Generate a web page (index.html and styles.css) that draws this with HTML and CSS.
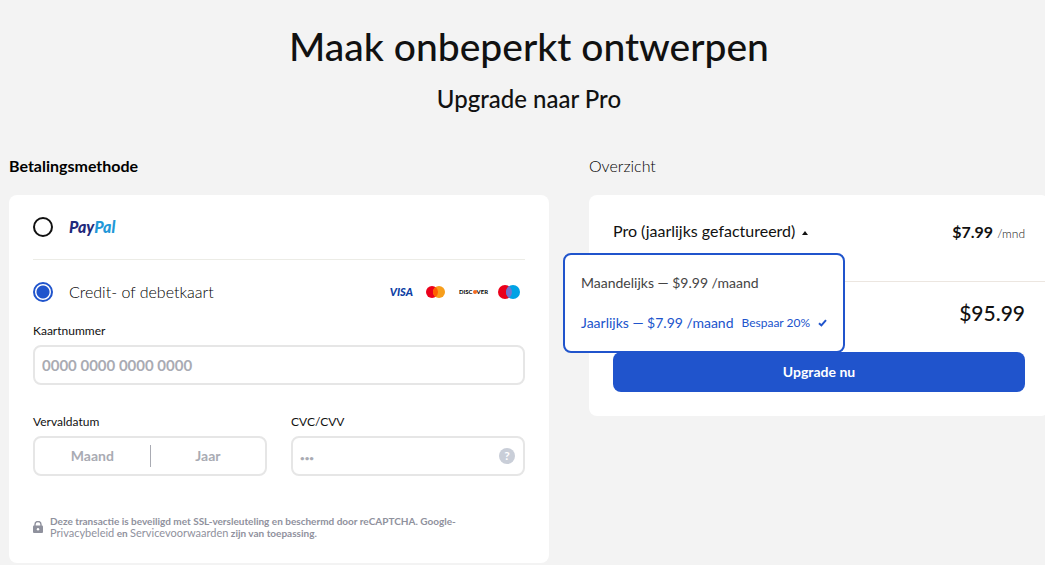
FILE: index.html
```html
<!DOCTYPE html>
<html lang="nl">
<head>
    <meta charset="UTF-8">
    <meta name="viewport" content="width=device-width, initial-scale=1.0">
    <title>Upgrade naar Pro</title>
    <link rel="stylesheet" href="styles.css">
</head>
<body>
    <main class="page">
        <header class="header">
            <h1>Maak onbeperkt ontwerpen</h1>
            <p class="subtitle">Upgrade naar Pro</p>
        </header>

        <div class="columns">
            <section>
                <h2 class="section-title bold">Betalingsmethode</h2>
                <form class="card">
                    <div class="method">
                        <input type="radio" name="method" id="paypal">
                        <label for="paypal" class="paypal">Pay<span>Pal</span></label>
                    </div>
                    <div class="method method-card">
                        <input type="radio" name="method" id="creditcard" checked>
                        <label for="creditcard">Credit- of debetkaart</label>
                        <div class="brands">
                            <span class="visa">VISA</span>
                            <svg width="20" height="12" viewBox="0 0 20 12">
                                <circle cx="6" cy="6" r="6" fill="#eb001b"/>
                                <circle cx="13" cy="6" r="6" fill="#f79e1b"/>
                                <path d="M9.5 1.1a6 6 0 0 1 0 9.8a6 6 0 0 1 0-9.8z" fill="#ff5f00"/>
                            </svg>
                            <span class="discover">DISC<i></i>VER</span>
                            <svg width="22" height="14" viewBox="0 0 22 14">
                                <circle cx="7" cy="7" r="7" fill="#eb001b"/>
                                <circle cx="15" cy="7" r="7" fill="#00a2e5"/>
                                <path d="M11 1.3a7 7 0 0 1 0 11.4a7 7 0 0 1 0-11.4z" fill="#7375cf"/>
                            </svg>
                        </div>
                    </div>

                    <div class="field">
                        <label for="number">Kaartnummer</label>
                        <input class="box" type="text" id="number" placeholder="0000 0000 0000 0000">
                    </div>

                    <div class="field-row">
                        <div class="field">
                            <label for="month">Vervaldatum</label>
                            <div class="box expiry">
                                <input type="text" id="month" placeholder="Maand">
                                <input type="text" id="year" placeholder="Jaar" aria-label="Jaar">
                            </div>
                        </div>
                        <div class="field">
                            <label for="cvc">CVC/CVV</label>
                            <div class="box cvc">
                                <input type="text" id="cvc" placeholder="•••">
                                <button type="button" class="help">?</button>
                            </div>
                        </div>
                    </div>

                    <div class="notice">
                        <svg width="10" height="12" viewBox="0 0 10 12">
                            <path d="M2 5V3.5a3 3 0 0 1 6 0V5" fill="none" stroke="#8f919d" stroke-width="1.4"/>
                            <rect y="4.6" width="10" height="7.4" rx="1" fill="#8f919d"/>
                            <circle cx="5" cy="8.3" r="1.2" fill="#fff"/>
                        </svg>
                        <p>Deze transactie is beveiligd met SSL-versleuteling en beschermd door reCAPTCHA. Google-<br><a href="#">Privacybeleid</a> en <a href="#">Servicevoorwaarden</a> zijn van toepassing.</p>
                    </div>
                </form>
            </section>

            <section>
                <h2 class="section-title">Overzicht</h2>
                <div class="card summary">
                    <div class="plan">
                        <button type="button" class="plan-toggle">Pro (jaarlijks gefactureerd) <i class="arrow"></i></button>
                        <div class="price"><b>$7.99</b> <small>/mnd</small></div>
                        <div class="menu">
                            <button type="button">Maandelijks — $9.99 /maand</button>
                            <button type="button" class="selected">
                                Jaarlijks — $7.99 /maand
                                <small>Bespaar 20%</small>
                                <svg width="9" height="8" viewBox="0 0 9 8">
                                    <path d="M1 4.2l2.4 2.2L8 1.2" fill="none" stroke="#2054cc" stroke-width="2"/>
                                </svg>
                            </button>
                        </div>
                    </div>
                    <div class="total">$95.99</div>
                    <button type="button" class="upgrade">Upgrade nu</button>
                </div>
            </section>
        </div>
    </main>
</body>
</html>
```
FILE: styles.css
```css
* {
    box-sizing: border-box;
}
body {
    margin: 0;
    background-color: #f3f3f3;
    color: #111;
    font-family: Lato, "Open Sans", sans-serif;
    font-size: 16px;
    line-height: 20px;
    overflow-x: hidden;
}
h1, h2, p {
    margin: 0;
}
input, button {
    font: inherit;
    color: inherit;
    margin: 0;
    padding: 0;
    border: none;
    background: none;
}
button {
    cursor: pointer;
}
.page {
    margin: 0 -4px 0 9px;
}
.header {
    padding-top: 22px;
    text-align: center;
}
h1 {
    font-size: 39px;
    line-height: 48px;
    font-weight: 500;
}
.subtitle {
    margin-top: 14px;
    font-size: 24px;
    line-height: 30px;
    font-weight: 500;
}
.columns {
    display: grid;
    grid-template-columns: 54fr 46fr;
    gap: 40px;
    align-items: start;
    margin-top: 42px;
}
.section-title {
    margin-bottom: 19px;
    color: #000;
    font-size: 16px;
    line-height: 20px;
    font-weight: 300;
}
.section-title.bold {
    font-weight: 700;
}
.card {
    padding: 0 24px 24px;
    background-color: #fff;
    border-radius: 8px;
}

/* payment methods */
.method {
    display: flex;
    align-items: center;
    gap: 16px;
    height: 64px;
    color: #000;
    font-weight: 300;
}
.method-card {
    border-top: 1px solid #ecece6;
}
.method input {
    appearance: none;
    width: 20px;
    height: 20px;
    border: 2px solid #111;
    border-radius: 50%;
}
.method input:checked {
    border-color: #2054cc;
    background: radial-gradient(circle, #2054cc 6px, #fff 7px);
}
.paypal {
    color: #1f2a7c;
    font-size: 16px;
    line-height: 18px;
    font-weight: 900;
    font-style: italic;
}
.paypal span {
    color: #2298d8;
}
.brands {
    display: flex;
    align-items: center;
    gap: 13px;
    margin-left: auto;
    padding-right: 5px;
}
.visa {
    color: #0e3fa5;
    font-size: 11px;
    font-weight: 900;
    font-style: italic;
}
.discover {
    display: flex;
    align-items: center;
    margin-right: -3px;
    font-size: 6px;
    font-weight: 700;
}
.discover i {
    width: 4px;
    height: 4px;
    border-radius: 50%;
    background-color: #f26a21;
}

/* card form */
.field {
    display: flex;
    flex-direction: column;
    gap: 6px;
}
.field label {
    font-size: 12px;
    line-height: 16px;
}
.field input {
    width: 100%;
    min-width: 0;
    font-size: 14px;
    font-weight: 700;
}
.box {
    display: flex;
    align-items: center;
    height: 40px;
    border: 2px solid #e6e6e6;
    border-radius: 8px;
}
.field input.box {
    padding: 0 7px;
    border: 2px solid #e6e6e6;
    font-size: 15px;
}
::placeholder {
    color: #a9abb3;
    opacity: 1;
}
.field-row {
    display: grid;
    grid-template-columns: 1fr 1fr;
    gap: 24px;
    margin-top: 29px;
}
.expiry input {
    text-align: center;
    line-height: 22px;
}
.expiry input + input {
    border-left: 1px solid #a9abb3;
}
.cvc {
    padding: 0 8px 0 7px;
}
.cvc input::placeholder {
    font-size: 8px;
}
.help {
    flex: none;
    width: 16px;
    height: 16px;
    border-radius: 50%;
    background-color: #c9ced8;
    color: #fff;
    font-size: 12px;
    line-height: 16px;
    font-weight: 700;
}
.notice {
    display: flex;
    align-items: center;
    gap: 7px;
    margin-top: 39px;
    color: #8f919d;
    font-size: 10px;
    line-height: 12px;
    font-weight: 700;
}
.notice a {
    color: inherit;
    font-size: 11px;
    font-weight: 400;
    text-decoration: none;
}

/* summary */
.plan {
    position: relative;
    display: flex;
    justify-content: space-between;
    height: 87px;
    padding-top: 26px;
    margin-right: -24px;
    padding-right: 24px;
    border-bottom: 1px solid #ece6e0;
}
.plan-toggle {
    display: flex;
    align-items: center;
    gap: 7px;
    height: 20px;
}
.arrow {
    margin-top: 4px;
    border: 3px solid transparent;
    border-top: none;
    border-bottom: 4px solid #111;
}
.price {
    padding-top: 1px;
}
.price small {
    font-size: 12px;
    font-weight: 300;
}
.menu {
    position: absolute;
    top: 58px;
    left: -50px;
    width: 282px;
    padding: 8px 16px;
    border: 2px solid #2054cc;
    border-radius: 8px;
    background-color: #fff;
}
.menu button {
    display: flex;
    align-items: center;
    gap: 8px;
    height: 40px;
    color: #444;
    font-size: 14px;
    white-space: nowrap;
}
.menu .selected {
    color: #2054cc;
}
.menu small {
    font-size: 12px;
}
.total {
    padding: 19px 0 27px;
    font-size: 21px;
    line-height: 24px;
    font-weight: 500;
    text-align: right;
}
.upgrade {
    display: block;
    width: 100%;
    height: 40px;
    border-radius: 8px;
    background-color: #2054cc;
    color: #fff;
    font-size: 14px;
    font-weight: 700;
}
```
